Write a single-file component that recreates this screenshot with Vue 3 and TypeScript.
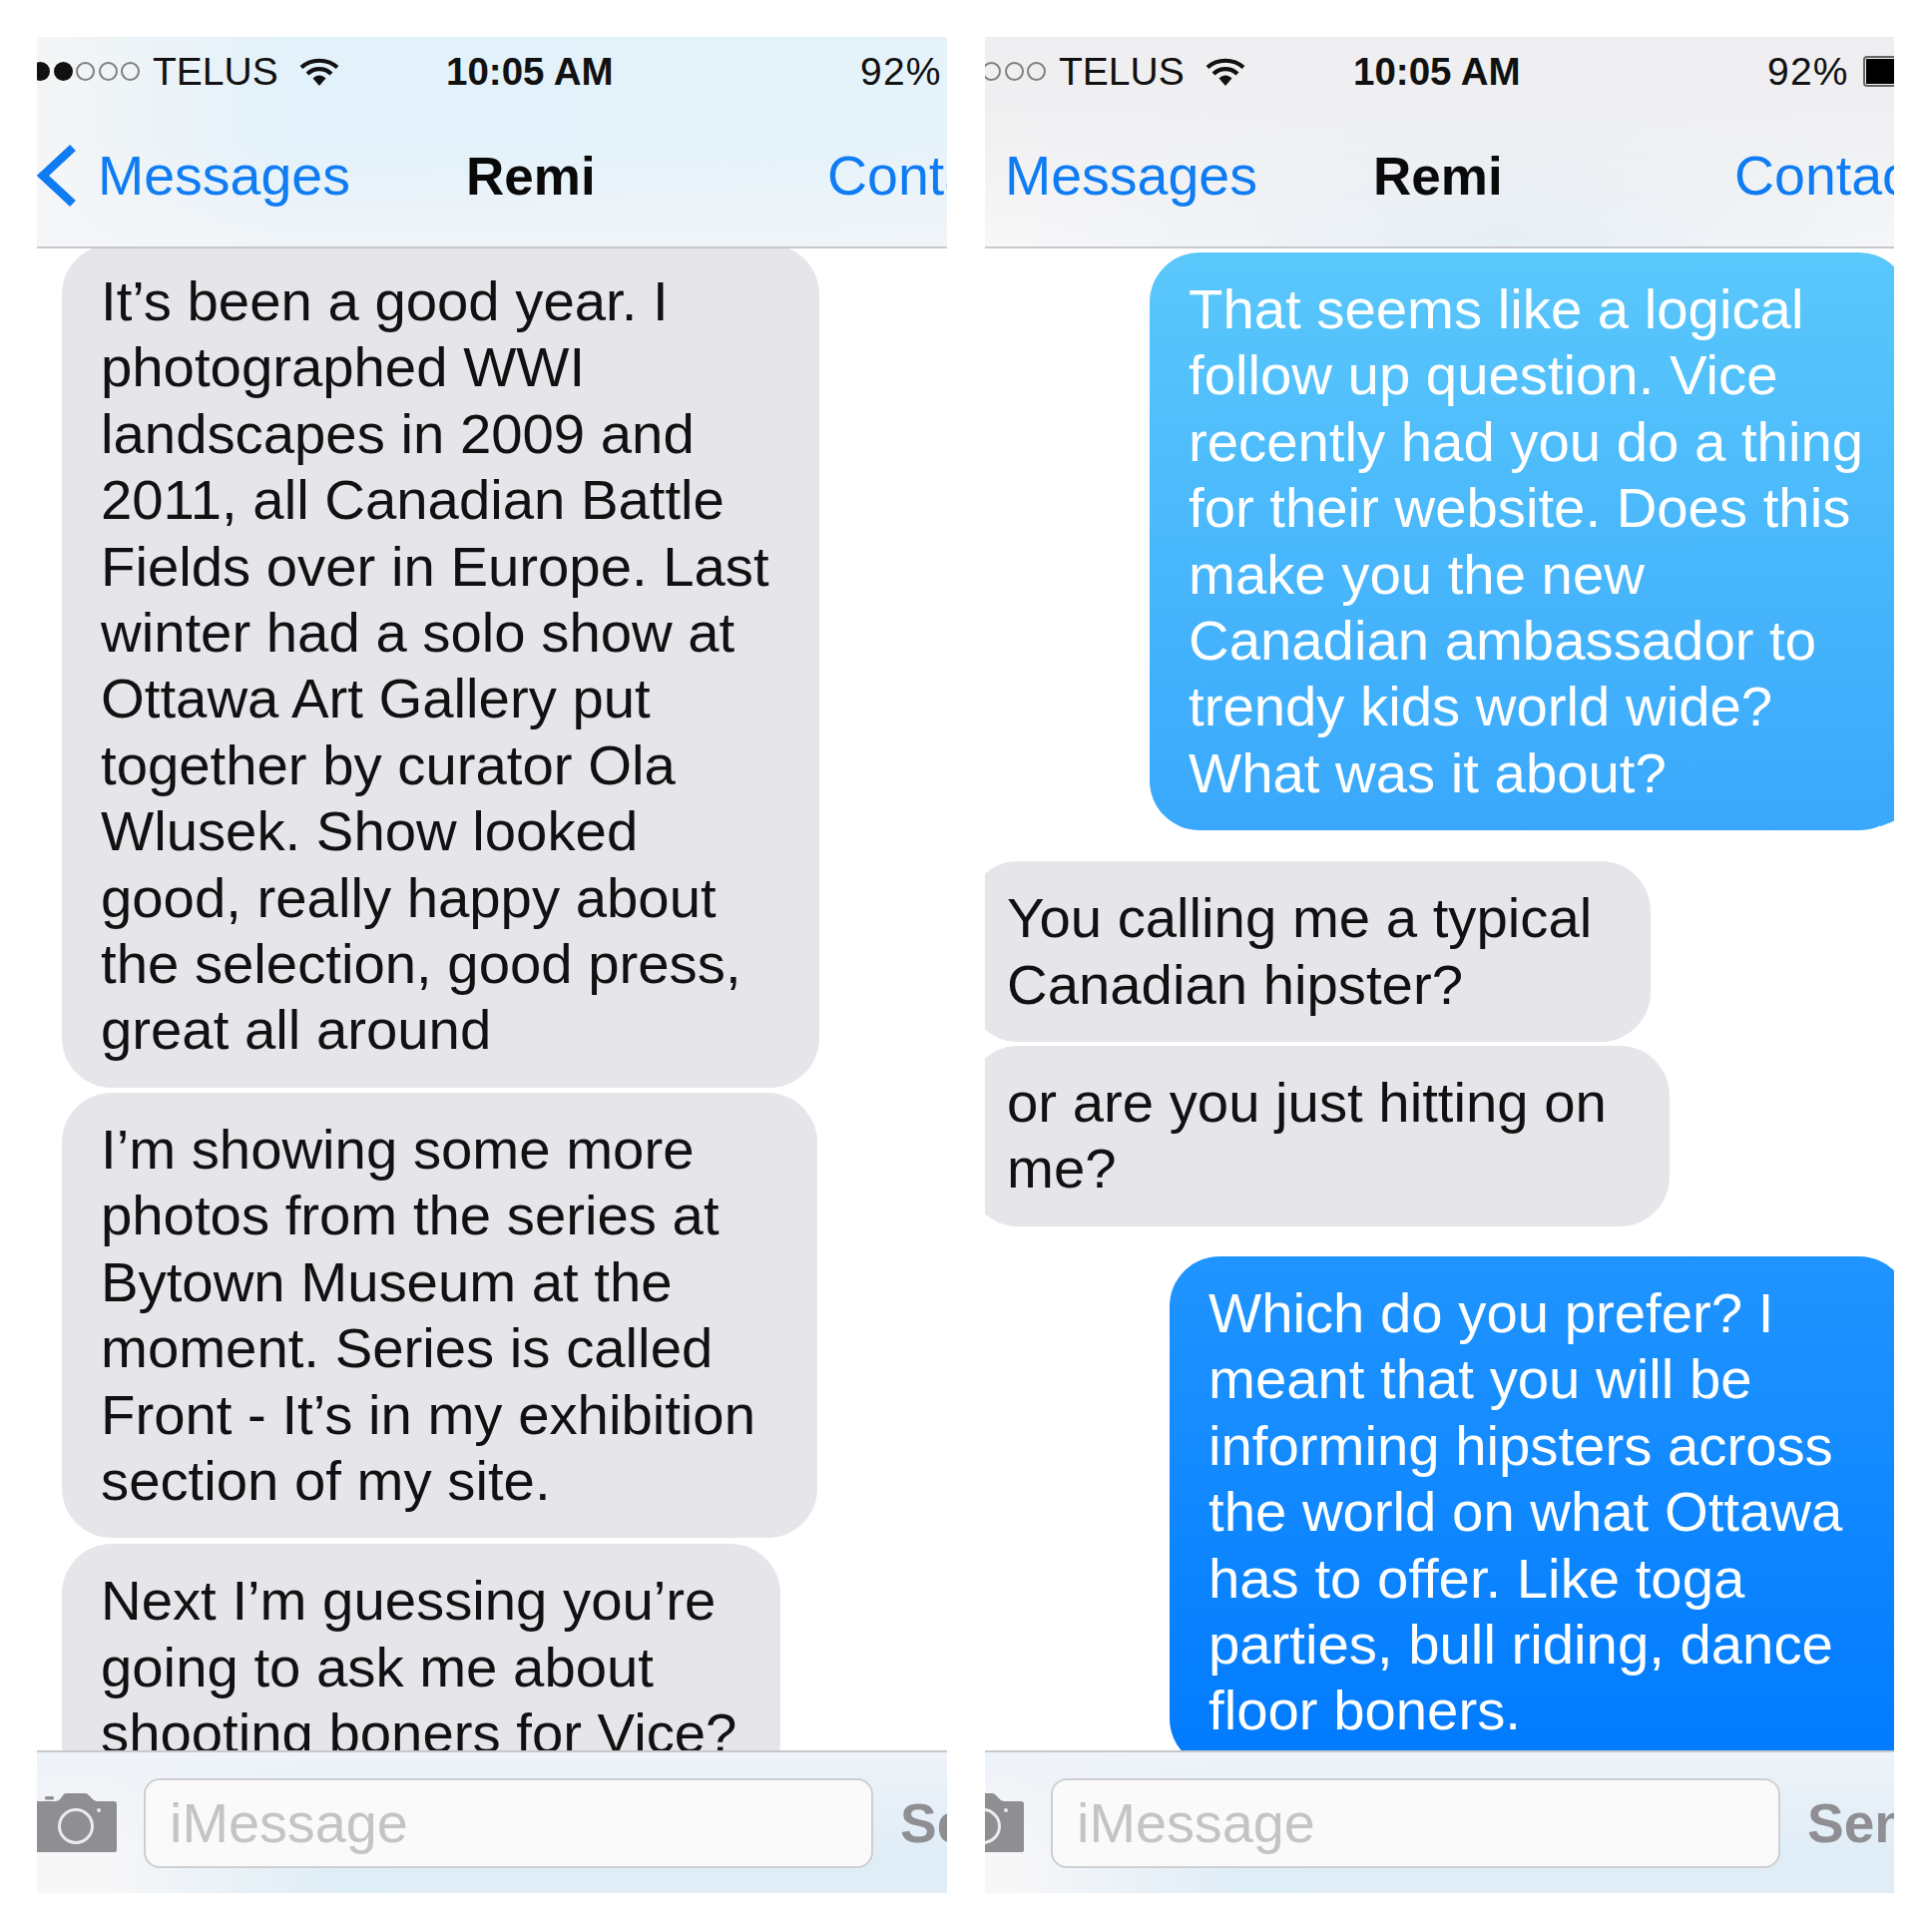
<script setup lang="ts">
interface Bubble {
  kind: 'them' | 'me'
  width: number
  gap: number
  lines: string[]
  tone?: string
}

interface Phone {
  id: string
  bubbles: Bubble[]
}

const phones: Phone[] = [
  {
    id: 'left',
    bubbles: [
      {
        kind: 'them',
        width: 759,
        gap: -4,
        lines: [
          'It’s been a good year. I',
          'photographed WWI',
          'landscapes in 2009 and',
          '2011, all Canadian Battle',
          'Fields over in Europe. Last',
          'winter had a solo show at',
          'Ottawa Art Gallery put',
          'together by curator Ola',
          'Wlusek. Show looked',
          'good, really happy about',
          'the selection, good press,',
          'great all around',
        ],
      },
      {
        kind: 'them',
        width: 757,
        gap: 5,
        lines: [
          'I’m showing some more',
          'photos from the series at',
          'Bytown Museum at the',
          'moment. Series is called',
          'Front - It’s in my exhibition',
          'section of my site.',
        ],
      },
      {
        kind: 'them',
        width: 720,
        gap: 6,
        lines: ['Next I’m guessing you’re', 'going to ask me about', 'shooting boners for Vice?'],
      },
    ],
  },
  {
    id: 'right',
    bubbles: [
      {
        kind: 'me',
        width: 761,
        gap: 4,
        tone: 'light',
        lines: [
          'That seems like a logical',
          'follow up question. Vice',
          'recently had you do a thing',
          'for their website. Does this',
          'make you the new',
          'Canadian ambassador to',
          'trendy kids world wide?',
          'What was it about?',
        ],
      },
      { kind: 'them', width: 684, gap: 31, lines: ['You calling me a typical', 'Canadian hipster?'] },
      { kind: 'them', width: 703, gap: 4, lines: ['or are you just hitting on', 'me?'] },
      {
        kind: 'me',
        width: 741,
        gap: 30,
        tone: 'deep',
        lines: [
          'Which do you prefer? I',
          'meant that you will be',
          'informing hipsters across',
          'the world on what Ottawa',
          'has to offer. Like toga',
          'parties, bull riding, dance',
          'floor boners.',
        ],
      },
    ],
  },
]
</script>

<template>
  <main class="page">
    <section v-for="phone in phones" :key="phone.id" class="phone" :class="phone.id">
      <div class="screen">
        <header class="top">
          <div class="status">
            <div class="carrier">
              <span class="dots">
                <i class="on"></i><i class="on"></i><i></i><i></i><i></i>
              </span>
              <span>TELUS</span>
              <svg class="wifi" viewBox="0 0 40 28" aria-hidden="true">
                <path d="M2 9.5C12 0.5 28 0.5 38 9.5" fill="none" stroke="#111" stroke-width="4.2" />
                <path d="M8 16C15 9.5 25 9.5 32 16" fill="none" stroke="#111" stroke-width="4.2" />
                <path d="M13.5 20.5C17.5 16.5 22.5 16.5 26.5 20.5L20 28Z" fill="#111" />
              </svg>
            </div>
            <div class="time">10:05 AM</div>
            <div class="power">
              <span class="percent">92%</span>
              <span class="battery"><b></b></span>
            </div>
          </div>
          <nav class="nav">
            <div class="back">
              <svg class="chevron" viewBox="0 0 40 66" aria-hidden="true">
                <path d="M36 5L6 33L36 61" fill="none" stroke="#0f7cf4" stroke-width="8.5" />
              </svg>
              <span>Messages</span>
            </div>
            <div class="title">Remi</div>
            <div class="contact">Contact</div>
          </nav>
        </header>

        <div class="chat">
          <div
            v-for="(bubble, i) in phone.bubbles"
            :key="i"
            class="bubble"
            :class="[bubble.kind, bubble.tone]"
            :style="{ width: bubble.width + 'px', marginTop: bubble.gap + 'px' }"
          >
            <span v-for="line in bubble.lines" :key="line" class="line">{{ line }}</span>
          </div>
        </div>

        <footer class="composer">
          <svg class="camera" viewBox="0 0 80 60" aria-hidden="true">
            <rect x="8" y="3" width="9" height="3.5" rx="1.5" fill="#8e8e93" />
            <path
              fill="#8e8e93"
              d="M3 8H19Q22 8 24 5L26 2Q27 0 30 0H48Q51 0 52 2L55 5Q57 8 60 8H77Q80 8 80 11V57Q80 59 77 59H0V8Z"
            />
            <circle cx="39" cy="33" r="16.5" fill="none" stroke="#ececee" stroke-width="3" />
            <circle cx="62" cy="17" r="2" fill="#ececee" />
          </svg>
          <div class="input">iMessage</div>
          <div class="send">Send</div>
        </footer>
      </div>
    </section>
  </main>
</template>

<style scoped>
.page {
  display: grid;
  grid-template-columns: 912px 911px;
  column-gap: 38px;
  padding: 37px 0 0 37px;
  font-family: "Liberation Sans", Arial, sans-serif;
  color: #111;
}

.phone {
  height: 1860px;
  overflow: hidden;
  background: #fff;
}

.screen {
  display: flex;
  flex-direction: column;
  width: 1054px;
  height: 100%;
}

.left .screen {
  margin-left: -20px;
}

.right .screen {
  margin-left: -61px;
}

.top {
  position: relative;
  z-index: 1;
  flex: none;
  border-bottom: 2px solid #c8c8cb;
}

.left .top {
  background:
    linear-gradient(180deg, rgba(255, 255, 255, 0) 50%, rgba(245, 246, 248, 0.75) 100%),
    linear-gradient(90deg, #f3f5f6 4%, #e2f1fa 26%, #e4f2fa 80%, #e8f2f9 100%);
}

.right .top {
  background:
    linear-gradient(180deg, rgba(239, 239, 241, 1) 30%, rgba(239, 239, 241, 0) 100%),
    linear-gradient(90deg, #f7f7f8 8%, #e6eff6 55%, #f4f6f8 90%);
}

.status {
  display: grid;
  grid-template-columns: 413px 415px 1fr;
  align-items: center;
  height: 69px;
  padding-left: 17px;
  font-size: 39px;
  line-height: 69px;
}

.carrier {
  display: flex;
  align-items: center;
}

.dots {
  display: flex;
  gap: 3.5px;
  margin: 0 13px 0 -3px;
}

.right .dots {
  margin-left: -4px;
}

.dots i {
  box-sizing: border-box;
  width: 19px;
  height: 19px;
  border: 2px solid #808080;
  border-radius: 50%;
}

.dots .on {
  background: #111;
  border-color: #111;
}

.wifi {
  width: 40px;
  height: 28px;
  margin-left: 21px;
}

.time {
  font-weight: 700;
  font-size: 38.5px;
}

.power {
  display: flex;
  align-items: center;
  gap: 14px;
}

.percent {
  letter-spacing: 1.2px;
}

.battery {
  display: block;
  box-sizing: border-box;
  width: 84px;
  height: 31px;
  padding: 1px;
  border: 2px solid #666;
  border-radius: 4px;
}

.battery b {
  display: block;
  height: 100%;
  background: #000;
}

.nav {
  display: grid;
  grid-template-columns: 433px 362px 1fr;
  align-items: center;
  height: 141px;
  padding-left: 17px;
  font-size: 55.5px;
  line-height: 141px;
  color: #0f7cf4;
}

.back {
  position: relative;
  padding-left: 64px;
}

.chevron {
  position: absolute;
  left: 3px;
  top: 37px;
  width: 40px;
  height: 66px;
}

.title {
  font-weight: 700;
  font-size: 53px;
  color: #0a0a0a;
}

.chat {
  flex: 1;
  min-height: 0;
  overflow: hidden;
  display: flex;
  flex-direction: column;
  font-size: 56.3px;
  line-height: 66.4px;
}

.bubble {
  flex: none;
  position: relative;
  box-sizing: border-box;
  padding: 24px 0 24px 39px;
  border-radius: 50px;
}

.them {
  align-self: flex-start;
  margin-left: 45px;
  background: #e5e5ea;
  color: #111;
}

.right .them {
  margin-left: 44px;
}

.me {
  align-self: flex-end;
  margin-right: 67px;
  color: #fff;
}

.me.light {
  background: linear-gradient(180deg, #5ac8fb 0%, #39a8fc 100%);
}

/* small tail that pokes out of the lower right corner */
.me.light::after {
  content: "";
  position: absolute;
  right: 0;
  bottom: 0;
  width: 30px;
  height: 33px;
  background: #3aa9fc;
  clip-path: polygon(1px 29px, 19px 22px, 30px 26px, 30px 0, 1px 0);
}

.me.deep {
  background: linear-gradient(180deg, #2095ff 0%, #007aff 100%);
}

.line {
  display: block;
  white-space: nowrap;
}

.composer {
  flex: none;
  position: relative;
  z-index: 1;
  display: flex;
  align-items: center;
  height: 141px;
  padding-left: 20px;
  border-top: 2px solid #c8c8cb;
  background:
    linear-gradient(180deg, rgba(238, 243, 248, 1) 0%, rgba(238, 243, 248, 0) 70%),
    linear-gradient(90deg, #f7f7f8 8%, #dfedf7 30%, #e0edf7 100%);
}

.camera {
  flex: none;
  width: 80px;
  height: 60px;
}

.input {
  box-sizing: border-box;
  flex: none;
  width: 731px;
  height: 90px;
  margin-left: 27px;
  padding-left: 24px;
  border: 2px solid #cfcfd2;
  border-radius: 16px;
  background: #fafafa;
  font-size: 55.8px;
  line-height: 86px;
  color: #c4c4c7;
}

.send {
  margin-left: 27px;
  font-size: 55px;
  font-weight: 700;
  color: #8e8e93;
}
</style>
